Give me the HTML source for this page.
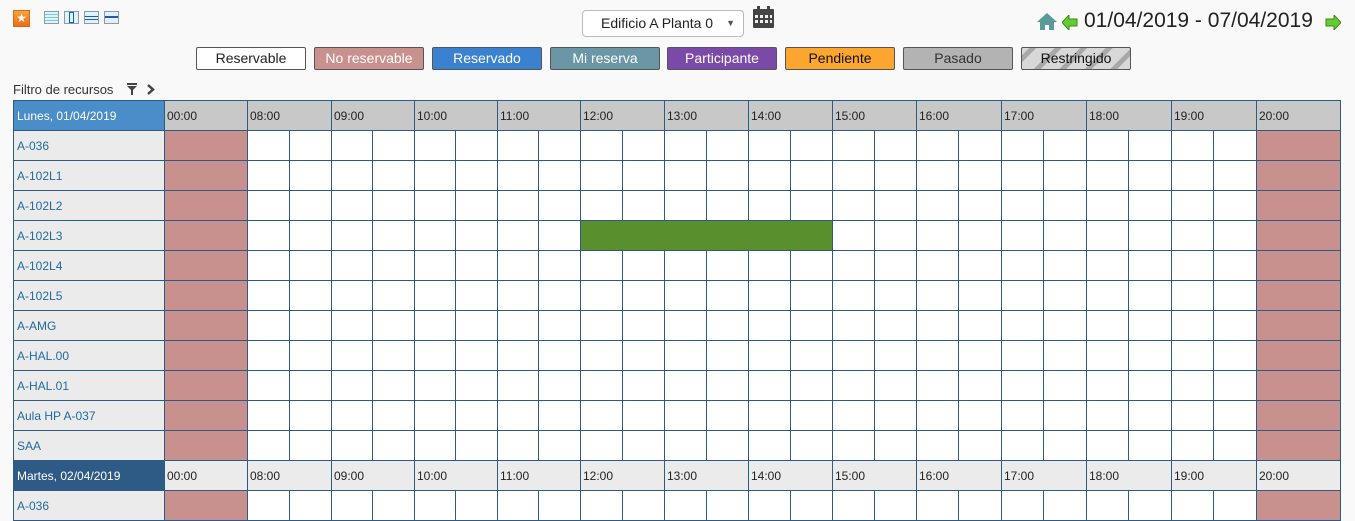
<!DOCTYPE html>
<html><head><meta charset="utf-8"><style>
body{margin:0;background:#f9f9f9;font-family:"Liberation Sans",sans-serif;width:1355px;height:507px;overflow:hidden;position:relative}
.abs{position:absolute}
.leg{position:absolute;top:47px;width:108px;height:21px;border:1px solid #555;border-radius:2px;font-size:14px;text-align:center;line-height:21px;color:#fff}
table{position:absolute;left:13px;top:100px;border-collapse:collapse;table-layout:fixed}
td{border:1px solid #2e5a86;height:29px;padding:0;font-size:12px;background:#fff}
td.l{background:#ebebeb;color:#1f6a9e;padding-left:3px}
td.n{background:#c8918e}
tr.h td,tr.h2 td{background:#c8c8c8;color:#222;padding-left:2px}
tr.h td.d{background:#4a8dc9;color:#fff;padding-left:3px}
tr.h2 td{background:#ebebeb}
tr.h2 td.d{background:#2e5a86;color:#fff;padding-left:3px}
td.g{background:#5a8f2e}
</style></head><body>
<div class="abs" style="left:13px;top:10px;width:15px;height:15px;background:linear-gradient(#f7a43a,#f06a14);border:1px solid #d4691f;color:#fff;font-size:12px;line-height:15px;text-align:center">★</div>
<div class="abs" style="left:44px;top:11px;width:13px;height:11px;border:1px solid #8a9aa8;background:repeating-linear-gradient(#dff3fc 0 2px,#7cc 2px 3px)"></div>
<div class="abs" style="left:64px;top:11px;width:13px;height:11px;border:1px solid #8a9aa8;background:#dff3fc"><div style="margin-left:4px;width:3px;height:9px;border:1px solid #2a55b0;background:#cfe"></div></div>
<div class="abs" style="left:84px;top:11px;width:13px;height:11px;border:1px solid #8a9aa8;background:#dff3fc"><div style="margin-top:4px;height:2px;border-top:1px solid #2a55b0;border-bottom:1px solid #2a55b0"></div></div>
<div class="abs" style="left:104px;top:11px;width:13px;height:11px;border:1px solid #8a9aa8;background:#dff3fc"><div style="margin-top:4px;height:2px;background:#2a55b0"></div></div>
<div class="abs" style="left:582px;top:10px;width:160px;height:25px;border:1px solid #bbb;border-radius:4px;background:#fff;font-size:14px;line-height:25px;color:#222"><span style="margin-left:18px">Edificio A Planta 0</span><span style="position:absolute;right:8px;top:0;font-size:9px;color:#555">▼</span></div>
<svg class="abs" style="left:753px;top:6px" width="21" height="22" viewBox="0 0 21 22"><rect x="0" y="3" width="21" height="19" rx="1" fill="#444"/><rect x="4" y="0" width="3" height="5" fill="#444"/><rect x="14" y="0" width="3" height="5" fill="#444"/><g fill="#eee"><rect x="2" y="9" width="3" height="3"/><rect x="7" y="9" width="3" height="3"/><rect x="12" y="9" width="3" height="3"/><rect x="17" y="9" width="2" height="3"/><rect x="2" y="14" width="3" height="3"/><rect x="7" y="14" width="3" height="3"/><rect x="12" y="14" width="3" height="3"/><rect x="17" y="14" width="2" height="3"/></g></svg>
<svg class="abs" style="left:1037px;top:13px" width="20" height="17" viewBox="0 0 20 17"><path d="M10 0L0 9h3v8h5v-5h4v5h5V9h3z" fill="#5a9a98"/></svg>
<svg class="abs" style="left:1062px;top:15px" width="16" height="15" viewBox="0 0 16 15"><path d="M0 7.5L7 0v4h8v7H7v4z" fill="#6c3" stroke="#3a8a10"/></svg>
<div class="abs" style="left:1084px;top:9px;font-size:21px;color:#222">01/04/2019 - 07/04/2019</div>
<svg class="abs" style="left:1325px;top:15px" width="16" height="15" viewBox="0 0 16 15"><path d="M16 7.5L9 0v4H1v7h8v4z" fill="#6c3" stroke="#3a8a10"/></svg>
<div class="leg" style="left:196px;background:#fff;color:#222">Reservable</div>
<div class="leg" style="left:314px;background:#c8918e">No reservable</div>
<div class="leg" style="left:432px;background:#3a82d0">Reservado</div>
<div class="leg" style="left:550px;background:#6a96a6">Mi reserva</div>
<div class="leg" style="left:667px;background:#7b4aa8">Participante</div>
<div class="leg" style="left:785px;background:#fda62e;color:#111">Pendiente</div>
<div class="leg" style="left:903px;background:#b3b3b3;color:#333">Pasado</div>
<div class="leg" style="left:1021px;background:repeating-linear-gradient(-45deg,#d8d8d8 0 9px,#a8a8a8 9px 14px,#d8d8d8 14px 18px);color:#111">Restringido</div>
<div class="abs" style="left:13px;top:82px;font-size:13px;color:#333">Filtro de recursos</div>
<svg class="abs" style="left:127px;top:83px" width="10" height="12" viewBox="0 0 10 12"><path d="M0 0h10v2H0zM0 3h10L6 7v5H4V7z" fill="#444"/></svg>
<svg class="abs" style="left:147px;top:84px" width="8" height="11" viewBox="0 0 8 11"><path d="M1 1l5 4.5L1 10" stroke="#444" stroke-width="2.5" fill="none"/></svg>
<table id="t"><colgroup><col style="width:151px"><col style="width:83px"></colgroup></table>
<script>
var w=[84,83,83,83,84,84,84,84,85,85,85,85];
var t=document.getElementById('t'),cg=t.querySelector('colgroup'),h='';
w.forEach(function(x){h+='<col style="width:'+Math.floor(x/2)+'px"><col style="width:'+Math.ceil(x/2)+'px">';});
h+='<col style="width:84px">';cg.insertAdjacentHTML('beforeend',h);
var hrs=['08','09','10','11','12','13','14','15','16','17','18','19'];
function hdr(c,d){var s='<tr class="'+c+'"><td class="d">'+d+'</td><td>00:00</td>';hrs.forEach(function(x){s+='<td colspan="2">'+x+':00</td>'});return s+'<td>20:00</td></tr>';}
function row(n,g){var s='<tr><td class="l">'+n+'</td><td class="n"></td>';for(var i=0;i<24;i++){if(g&&i>=8&&i<14){if(i==8)s+='<td class="g" colspan="6"></td>';}else s+='<td></td>';}return s+'<td class="n"></td></tr>';}
var r=hdr('h','Lunes, 01/04/2019');
['A-036','A-102L1','A-102L2','A-102L3','A-102L4','A-102L5','A-AMG','A-HAL.00','A-HAL.01','Aula HP A-037','SAA'].forEach(function(n){r+=row(n,n=='A-102L3')});
r+=hdr('h2','Martes, 02/04/2019')+row('A-036');
t.insertAdjacentHTML('beforeend',r);
</script>
</body></html>
